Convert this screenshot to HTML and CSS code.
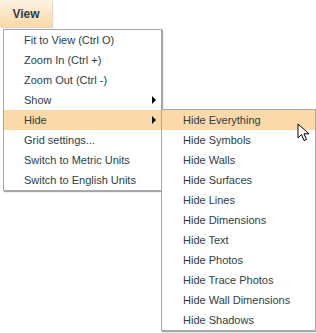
FILE: index.html
```html
<!DOCTYPE html>
<html lang="en">
<head>
  <meta charset="UTF-8" />
  <title>View menu</title>
  <link rel="stylesheet" href="styles.css">
</head>
<body>
  <button class="menu-btn">View</button>

  <div class="menus">
    <ul class="menu main-menu">
      <li>Fit to View (Ctrl O)</li>
      <li>Zoom In (Ctrl +)</li>
      <li>Zoom Out (Ctrl -)</li>
      <li class="has-sub">Show</li>
      <li class="has-sub active">Hide</li>
      <li>Grid settings...</li>
      <li>Switch to Metric Units</li>
      <li>Switch to English Units</li>
    </ul>

    <ul class="menu sub-menu">
      <li class="active">Hide Everything</li>
      <li>Hide Symbols</li>
      <li>Hide Walls</li>
      <li>Hide Surfaces</li>
      <li>Hide Lines</li>
      <li>Hide Dimensions</li>
      <li>Hide Text</li>
      <li>Hide Photos</li>
      <li>Hide Trace Photos</li>
      <li>Hide Wall Dimensions</li>
      <li>Hide Shadows</li>
    </ul>
  </div>

  <svg class="cursor" width="14" height="20" viewBox="0 0 14 20">
    <path d="M1 1 L1 15 L4.5 11.5 L7 17.5 L9.5 16.5 L7 10.8 L12 10.8 Z" fill="#fff" stroke="#000" stroke-width="1" stroke-linejoin="miter"/>
  </svg>
</body>
</html>
```

FILE: styles.css
```css
body {
  margin: 0;
  font-family: 'Liberation Sans', Arial, sans-serif;
  background-color: #fff;
  color: #2b4046;
  position: relative;
  width: 316px;
  height: 333px;
  overflow: hidden;
}
.menu-btn {
  display: block;
  width: 52px;
  height: 27px;
  margin: 0;
  padding: 0;
  border: none;
  background: linear-gradient(#fdf3e4, #fbd8a6);
  box-shadow: 1px 1px 1px rgba(0,0,0,0.15);
  font-family: 'Liberation Sans', Arial, sans-serif;
  font-size: 12px;
  font-weight: bold;
  color: #2c3d47;
}
.menus {
  display: flex;
  align-items: flex-start;
  margin: 2px 0 0 3px;
}
.menu {
  list-style: none;
  margin: 0;
  padding: 0;
  background-color: #fff;
  border: 1px solid #a8a8a8;
  box-shadow: 1px 1px 1px rgba(0,0,0,0.35);
}
.menu li {
  height: 20px;
  line-height: 20px;
  font-size: 11px;
  white-space: nowrap;
  position: relative;
}
.main-menu {
  width: 157px;
}
.main-menu li {
  padding-left: 20px;
}
.sub-menu {
  width: 153px;
  margin: 80px 0 0 -1px;
  position: relative;
}
.sub-menu li {
  padding-left: 21px;
}
.menu li.active {
  background-color: #fbd9a8;
}
.has-sub::after {
  content: '';
  position: absolute;
  right: 5px;
  top: 6px;
  border-left: 4px solid #000;
  border-top: 4px solid transparent;
  border-bottom: 4px solid transparent;
}
.cursor {
  position: absolute;
  left: 297px;
  top: 123px;
}
```
